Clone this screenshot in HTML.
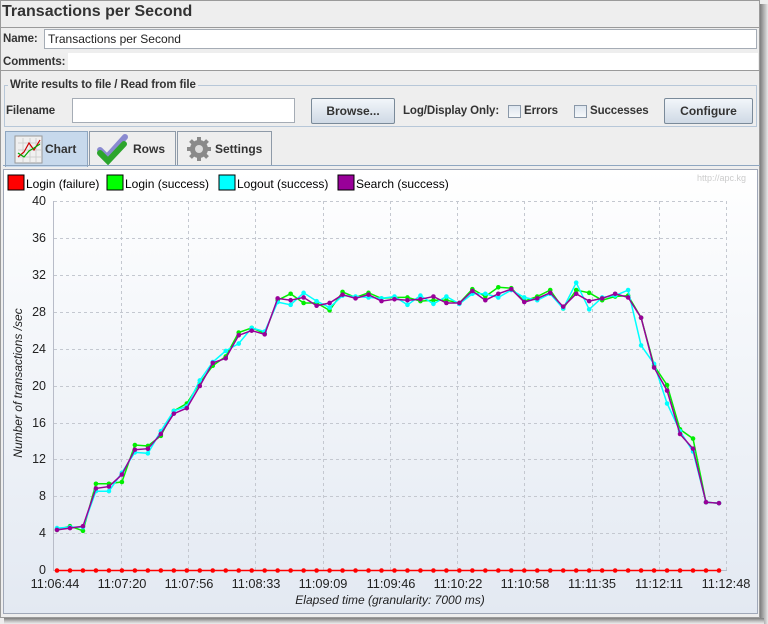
<!DOCTYPE html>
<html><head><meta charset="utf-8"><style>
*{box-sizing:border-box;margin:0;padding:0}
body{width:768px;height:624px;background:#eeeeee;font-family:"Liberation Sans",sans-serif;font-size:12px;color:#333;position:relative;overflow:hidden}
.abs{position:absolute}
.b{font-weight:bold;font-size:11.5px;letter-spacing:-0.1px}
.inp{position:absolute;background:#fff;border:1px solid #a5acb5}
.btn{position:absolute;border:1px solid #7a8a99;background:linear-gradient(#f2f6fa,#cfd9e5);font-weight:bold;text-align:center;border-radius:2px}
.cb{position:absolute;width:13px;height:13px;border:1px solid #8a98a8;background:linear-gradient(#dde5ee,#f6f8fa)}
.tab{position:absolute;border:1px solid #8e9aa8;border-bottom:none;font-weight:bold;font-size:12px}
</style></head><body>
<div class="abs" style="left:0;top:0;width:760px;height:618px;border:1px solid #9a9a9a;background:#eeeeee"></div>
<div class="abs" style="left:760px;top:4px;width:8px;height:620px;background:linear-gradient(90deg,#7d7d7d,#bdbdbd 60%,#e8e8e8)"></div>
<div class="abs" style="left:4px;top:618px;width:760px;height:6px;background:linear-gradient(#7d7d7d,#c8c8c8 60%,#eee)"></div>
<div class="abs" style="left:2px;top:3px;font-size:16px;font-weight:bold;color:#333">Transactions per Second</div>
<div class="abs" style="left:1px;top:27px;width:758px;height:1px;background:#9a9a9a"></div>
<div class="abs b" style="left:3px;top:33px">Name:</div>
<div class="inp" style="left:44px;top:29px;width:713px;height:20px;padding:2px 3px;color:#222">Transactions per Second</div>
<div class="abs b" style="left:3px;top:56px">Comments:</div>
<div class="abs" style="left:68px;top:53px;width:690px;height:17px;background:#fff"></div>
<div class="abs" style="left:1px;top:70px;width:758px;height:1px;background:#9a9a9a"></div>
<div class="abs" style="left:4px;top:85px;width:753px;height:42px;border:1px solid #b7c7d8"></div>
<div class="abs b" style="left:8px;top:79px;background:#eee;padding:0 2px">Write results to file / Read from file</div>
<div class="abs b" style="left:6px;top:105px">Filename</div>
<div class="inp" style="left:72px;top:98px;width:223px;height:25px"></div>
<div class="btn" style="left:311px;top:98px;width:84px;height:26px;line-height:24px">Browse...</div>
<div class="abs b" style="left:403px;top:105px">Log/Display Only:</div>
<div class="cb" style="left:508px;top:105px"></div>
<div class="abs b" style="left:524px;top:105px">Errors</div>
<div class="cb" style="left:574px;top:105px"></div>
<div class="abs b" style="left:590px;top:105px">Successes</div>
<div class="btn" style="left:664px;top:98px;width:89px;height:26px;line-height:24px">Configure</div>
<div class="tab" style="left:5px;top:131px;width:83px;height:36px;background:#c7d9ec;border-color:#8ea6c0"><svg class="abs" style="left:8px;top:3px" width="30" height="30"><rect x="1" y="1" width="27" height="27" fill="#f0f0f0" stroke="#999"/><path d="M4 8H27M4 15H27M4 22H27M9 3V27M16 3V27M22 3V27" stroke="#cfcfcf" stroke-width="1"/><polyline points="4,22 10,17 15,8 20,15 26,5" fill="none" stroke="#c00" stroke-width="1.2"/><polyline points="4,18 10,22 15,16 20,13 26,9" fill="none" stroke="#0a0" stroke-width="1.2"/></svg><span class="abs" style="left:39px;top:10px">Chart</span></div>
<div class="tab" style="left:89px;top:131px;width:87px;height:34px;background:#eee"><svg class="abs" style="left:7px;top:1px" width="34" height="32"><path d="M3 17l7 7L28 4" fill="none" stroke="#8a8ad0" stroke-width="6" stroke-linecap="round"/><path d="M3 20l8 8L27 11" fill="none" stroke="#2da52d" stroke-width="6" stroke-linecap="round"/></svg><span class="abs" style="left:43px;top:10px">Rows</span></div>
<div class="tab" style="left:177px;top:131px;width:95px;height:34px;background:#eee"><svg class="abs" style="left:8px;top:4px" width="26" height="26"><g fill="#8a8a8a"><circle cx="13" cy="13" r="9"/><g stroke="#8a8a8a" stroke-width="4"><path d="M13 1V25M1 13H25M4.5 4.5L21.5 21.5M21.5 4.5L4.5 21.5"/></g></g><circle cx="13" cy="13" r="4" fill="#ddd"/></svg><span class="abs" style="left:37px;top:10px">Settings</span></div>
<div class="abs" style="left:3px;top:165px;width:757px;height:1px;background:#8ea6c0"></div>
<div class="abs" style="left:3px;top:169px;width:755px;height:445px;border:1px solid #a0a8b8;background:linear-gradient(#ffffff,#f6f8fb 30%,#e3e9f2)"></div>
<div class="abs" style="left:697px;top:173px;font-size:9px;color:#ccc">http://apc.kg</div>
<svg class="abs" style="left:0;top:0" width="768" height="624" font-family="Liberation Sans, sans-serif">
<g font-size="12" fill="#000">
<rect x="8" y="175" width="16" height="15" fill="#f00" stroke="#000"/><text x="26" y="188">Login (failure)</text>
<rect x="107" y="175" width="16" height="15" fill="#0f0" stroke="#000"/><text x="125" y="188">Login (success)</text>
<rect x="219" y="175" width="16" height="15" fill="#0ff" stroke="#000"/><text x="237" y="188">Logout (success)</text>
<rect x="338" y="175" width="16" height="15" fill="#909" stroke="#000"/><text x="356" y="188">Search (success)</text>
</g>
<g stroke="#c4c8d0" stroke-dasharray="3,3" stroke-width="1">
<path d="M54 201.5H727M54 238.5H727M54 275.5H727M54 312.5H727M54 349.5H727M54 386.5H727M54 423.5H727M54 459.5H727M54 496.5H727M54 533.5H727"/>
<path d="M121.5 201V570M188.5 201V570M255.5 201V570M323.5 201V570M390.5 201V570M457.5 201V570M524.5 201V570M592.5 201V570M659.5 201V570M726.5 201V570"/>
</g>
<path d="M53.5 201V570.5H727" stroke="#b8bcc8" fill="none"/>
<g font-size="12.5" fill="#222" text-anchor="end">
<text x="46" y="205">40</text><text x="46" y="242">36</text><text x="46" y="279">32</text><text x="46" y="316">28</text><text x="46" y="353">24</text><text x="46" y="390">20</text><text x="46" y="427">16</text><text x="46" y="463">12</text><text x="46" y="500">8</text><text x="46" y="537">4</text><text x="46" y="574">0</text>
</g>
<g font-size="12.8" fill="#222" text-anchor="middle">
<text x="55" y="588">11:06:44</text><text x="122" y="588">11:07:20</text><text x="189" y="588">11:07:56</text><text x="256" y="588">11:08:33</text><text x="323" y="588">11:09:09</text><text x="391" y="588">11:09:46</text><text x="458" y="588">11:10:22</text><text x="525" y="588">11:10:58</text><text x="592" y="588">11:11:35</text><text x="659" y="588">11:12:11</text><text x="726" y="588">11:12:48</text>
</g>
<g font-size="12" fill="#222" text-anchor="middle">
<text x="390" y="604" font-style="italic">Elapsed time (granularity: 7000 ms)</text>
<text transform="translate(22,383) rotate(-90)" font-style="italic">Number of transactions /sec</text>
</g>
<g id="series"></g>
</svg>
<script>
var P=[4.4,4.6,4.8,8.9,9.1,10.4,13.1,13.2,14.8,17.0,17.6,20.0,22.5,23.0,25.5,26.0,25.6,29.5,29.3,29.6,28.7,29.0,29.9,29.5,29.9,29.2,29.4,29.3,29.4,29.7,29.0,29.0,30.3,29.3,30.0,30.5,29.1,29.5,30.1,28.6,30.0,29.2,29.5,30.0,29.6,27.4,22.0,19.5,14.8,13.2,7.4,7.3];
var dG=[0,.2,-.5,.5,.3,-.8,.5,.3,-.2,.3,.5,.3,-.3,.2,.3,.3,.1,-.2,.7,-.6,.3,-.8,.3,.1,.2,.3,.2,.3,-.2,-.4,.3,0,.2,.4,.7,.1,.1,.2,.3,-.2,.4,.9,-.2,-.3,.2,0,.2,.6,.5,1.1,0,0];
var dC=[.2,.1,-.1,-.3,-.5,.2,-.3,-.5,.3,.3,.2,.6,.1,.8,-.9,.3,.3,-.4,-.5,.5,.5,-.5,-.1,.2,-.3,.3,.3,-.5,.4,-.8,.7,-.1,-.3,.7,-.4,-.1,.5,-.2,-.1,-.2,1.2,-.9,.1,-.2,.8,-3.0,.4,-1.4,.3,-.3,0,0];
var g=document.getElementById('series'),ns='http://www.w3.org/2000/svg';
function X(i){return 57+i*12.98}function Y(v){return 570.5-v*9.225}
function draw(arr,col){var pts=arr.map(function(v,i){return X(i).toFixed(1)+','+Y(v).toFixed(1)}).join(' ');
var pl=document.createElementNS(ns,'polyline');pl.setAttribute('points',pts);pl.setAttribute('fill','none');pl.setAttribute('stroke',col);pl.setAttribute('stroke-width','1.5');g.appendChild(pl);
arr.forEach(function(v,i){var c=document.createElementNS(ns,'circle');c.setAttribute('cx',X(i));c.setAttribute('cy',Y(v));c.setAttribute('r','2.3');c.setAttribute('fill',col);g.appendChild(c);});}
draw(P.map(function(){return 0}),'#ff0000');
draw(P.map(function(v,i){return v+dG[i]}),'#00ee00');
draw(P.map(function(v,i){return v+dC[i]}),'#00ffff');
draw(P,'#990099');
</script>
</body></html>
